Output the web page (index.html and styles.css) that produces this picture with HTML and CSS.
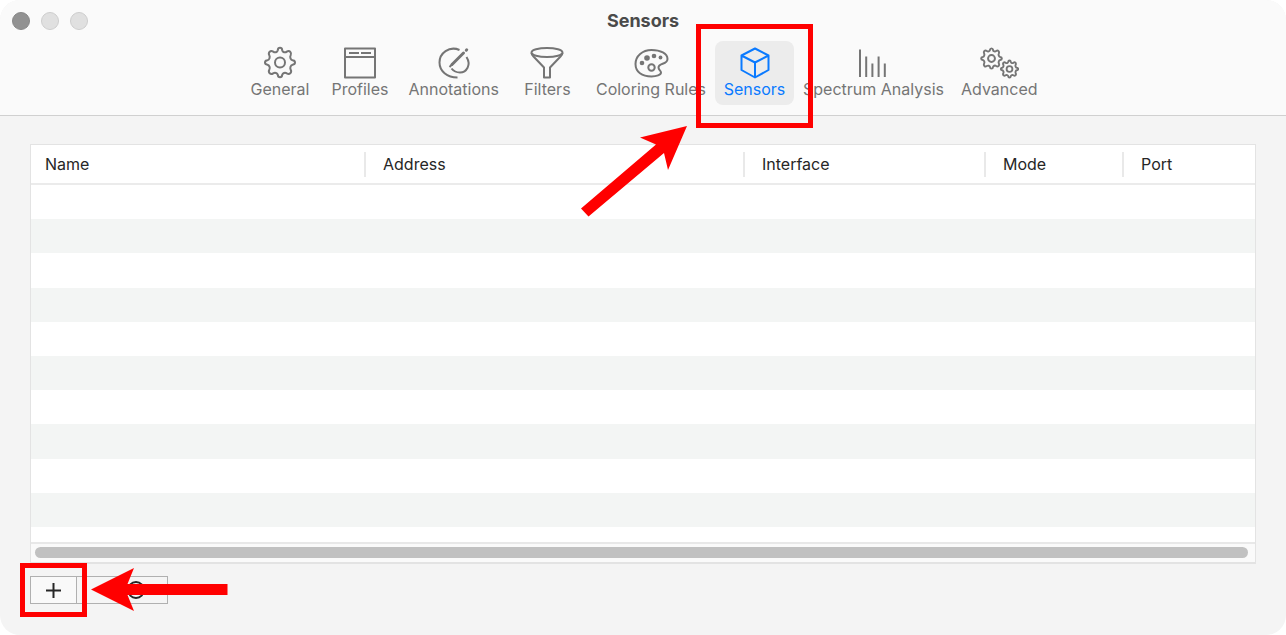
FILE: index.html
```html
<!DOCTYPE html>
<html lang="en">
<head>
<meta charset="utf-8">
<title>Sensors</title>
<link rel="stylesheet" href="styles.css">
</head>
<body>
<div class="window">
  <header class="titlebar">
    <div class="title-row">
      <div class="lights">
        <button class="light light-close" aria-label="Close"></button>
        <button class="light" aria-label="Minimize"></button>
        <button class="light" aria-label="Zoom"></button>
      </div>
      <h1 class="title">Sensors</h1>
    </div>
    <nav class="toolbar">
      <button class="tab">
        <svg class="icon" width="40" height="34" viewBox="0 0 40 34"><use href="#gear"/></svg>
        <span>General</span>
      </button>
      <button class="tab">
        <svg class="icon" width="40" height="34" viewBox="0 0 40 34"><path d="M5 3.500h30v29h-30zM5 12h30M9 8h10M21 8h10"/></svg>
        <span>Profiles</span>
      </button>
      <button class="tab">
        <svg class="icon" width="40" height="34" viewBox="0 0 40 34"><path d="M25.500 5C15 .500 5.500 8.500 5.500 17.500C5.500 26 13 32.500 23.500 32.500M32.500 12C37.500 20 32.500 27.500 26 27.500C22 27.500 19.500 26 17.500 23.500"/><path class="thick" d="M18 19.500L29.500 8M32.300 5.200l.400-.400"/><path d="M15.500 22l3-3"/></svg>
        <span>Annotations</span>
      </button>
      <button class="tab">
        <svg class="icon" width="40" height="34" viewBox="0 0 40 34"><ellipse cx="20" cy="7.500" rx="15.500" ry="4.500"/><path d="M4.500 8c0 1.500 1 2.500 2 3.500L17 22.500V32.500h6V22.500L33.500 11.500c1-1 2-2 2-3.500"/></svg>
        <span>Filters</span>
      </button>
      <button class="tab">
        <svg class="icon" width="40" height="34" viewBox="0 0 40 34"><path d="M20.500 5C11.500 5 4.500 11 4.500 19S11 31.500 20.500 31.500c5 0 9.500-1.500 9.500-4 0-2-2.500-2.500-2.500-5 0-5 9-2.500 9-8.500 0-5.500-7-9-16-9z"/><circle cx="20.500" cy="22.500" r="3.200"/><g class="dots"><circle cx="11" cy="18" r="2.300"/><circle cx="16" cy="13" r="2.800"/><circle cx="23" cy="11" r="2.300"/><circle cx="29.500" cy="12.500" r="1.900"/></g></svg>
        <span>Coloring Rules</span>
      </button>
      <button class="tab tab-active" aria-current="page">
        <svg class="icon" width="40" height="34" viewBox="0 0 40 34"><path d="M20 3.500L33.500 10.500V25L20 32.500L6.500 25V10.500zM6.500 10.500L20 17.500L33.500 10.500M20 17.500V32.500"/></svg>
        <span>Sensors</span>
      </button>
      <button class="tab">
        <svg class="icon" width="40" height="34" viewBox="0 0 40 34"><path d="M7 4.500V32M13.200 11.500V32M19.400 18.500V32M25.600 11.500V32M31.800 18.500V32"/></svg>
        <span>Spectrum Analysis</span>
      </button>
      <button class="tab">
        <svg class="icon" width="40" height="34" viewBox="0 0 40 34"><g transform="translate(12.500 13.500) scale(.69) translate(-20 -17.500)"><use href="#gear" stroke-width="2.800"/></g><g transform="translate(30.500 24) scale(.58) translate(-20 -17.500)"><use href="#gear" stroke-width="3.200"/></g></svg>
        <span>Advanced</span>
      </button>
    </nav>
  </header>

  <main class="content">
    <section class="sensor-list">
      <table class="grid">
        <colgroup><col class="col-name"><col class="col-address"><col class="col-interface"><col class="col-mode"><col></colgroup>
        <thead>
          <tr><th><div>Name</div></th><th><div>Address</div></th><th><div>Interface</div></th><th><div>Mode</div></th><th><div>Port</div></th></tr>
        </thead>
        <tbody>
          <tr><td colspan="5"></td></tr>
          <tr><td colspan="5"></td></tr>
          <tr><td colspan="5"></td></tr>
          <tr><td colspan="5"></td></tr>
          <tr><td colspan="5"></td></tr>
          <tr><td colspan="5"></td></tr>
          <tr><td colspan="5"></td></tr>
          <tr><td colspan="5"></td></tr>
          <tr><td colspan="5"></td></tr>
          <tr><td colspan="5"></td></tr>
          <tr class="partial"><td colspan="5"></td></tr>
        </tbody>
      </table>
      <div class="scroll-track"><div class="scroll-thumb"></div></div>
    </section>
    <div class="actions">
      <button class="action action-add" aria-label="Add"><svg width="15" height="15" viewBox="0 0 15 15"><path d="M7.500 0V15M0 7.500H15"/></svg></button>
      <button class="action action-more" aria-label="More options"><svg width="20" height="20" viewBox="0 0 20 20"><circle cx="10" cy="10" r="8"/></svg></button>
    </div>
  </main>

  <svg class="callouts" width="1286" height="635" viewBox="0 0 1286 635" aria-hidden="true">
    <rect x="698.500" y="26.500" width="112" height="99"/>
    <rect x="22.500" y="565.500" width="62" height="49"/>
    <path d="M687 126L668 170L664 153L588.500 216.500L581 208.500L656 144.500L640 137.500z"/>
    <path d="M91 589.500L134 568L127.500 584H227.500V595H127.500L134 611z"/>
  </svg>
</div>

<svg class="defs" width="0" height="0" aria-hidden="true">
  <defs>
    <path id="gear" d="M17.800 5.200Q18 2.800 20 2.800T22.200 5.200Q22.500 6.800 24 7.200T26.800 6.600Q28.800 5.200 30.200 6.700T30.700 10.200Q29.800 11.600 30.500 13.300T32.600 15.300Q35 15.600 35 17.500T32.600 19.700Q31 20 30.500 21.700T30.700 24.800Q31.800 26.900 30.300 28.300T26.800 28.400Q25.400 27.400 24 28T22.200 29.800Q22 32.200 20 32.200T17.800 29.800Q17.500 28.500 16 28T13.200 28.400Q11.200 29.800 9.700 28.300T9.300 24.800Q10.200 23.400 9.500 21.700T7.400 19.700Q5 19.400 5 17.500T7.400 15.300Q9 15 9.500 13.300T9.300 10.200Q8.200 8.200 9.700 6.700T13.200 6.600Q14.600 7.600 16 7.200T17.800 5.200zM25 17.500A5 5 0 1 1 15 17.500A5 5 0 1 1 25 17.500z"/>
  </defs>
</svg>
</body>
</html>
```
FILE: styles.css
```css
* { box-sizing: border-box; }

body {
  margin: 0;
  background: #fff;
  font-family: Inter, "Liberation Sans", sans-serif;
  font-size: 16px;
  color: #262626;
}

button {
  margin: 0;
  padding: 0;
  border: 0;
  background: none;
  font: inherit;
  color: inherit;
}

.defs { position: absolute; }

.window {
  position: relative;
  display: flex;
  flex-direction: column;
  min-height: 100vh;
  border-radius: 20px;
  overflow: hidden;
  background: #f4f4f4;
}

.titlebar {
  height: 116px;
  background: #fafafa;
  border-bottom: 1px solid #d0d0d0;
}

.title-row {
  display: grid;
  grid-template-columns: 1fr auto 1fr;
  align-items: center;
  height: 41px;
  padding: 0 12px;
}

.lights { display: flex; gap: 11px; }

.light {
  width: 18px;
  height: 18px;
  border: 1px solid #cdcdcd;
  border-radius: 50%;
  background: #e0e0e0;
}

.light-close { background: #929292; border-color: #888; }

.title {
  margin: 0;
  font-size: 18px;
  line-height: 24px;
  font-weight: 700;
  color: #4a4a4a;
}

.toolbar { display: flex; justify-content: center; gap: 1px; }

.tab {
  display: flex;
  flex-direction: column;
  align-items: center;
  min-width: 79px;
  height: 64px;
  padding: 4px 8px;
  border-radius: 8px;
  line-height: 20px;
  white-space: nowrap;
  color: #757575;
}

.tab-active { background: #ececec; color: #0a7aff; }

.icon {
  flex: none;
  fill: none;
  stroke: currentColor;
  stroke-width: 2;
  stroke-linejoin: round;
}

.icon .thick { stroke-width: 3; stroke-linecap: round; }
.icon .dots { fill: currentColor; stroke: none; }

.content {
  flex: 1;
  display: flex;
  flex-direction: column;
  gap: 12px;
  padding: 28px 30px 31px;
}

.sensor-list {
  flex: 1;
  display: flex;
  flex-direction: column;
  border: 1px solid #e3e3e3;
  border-bottom-width: 2px;
  background: #fff;
}

.grid {
  flex: 1;
  width: 100%;
  table-layout: fixed;
  border-collapse: separate;
  border-spacing: 0;
}

.col-name { width: 335px; }
.col-address { width: 379px; }
.col-interface { width: 241px; }
.col-mode { width: 138px; }

.grid th {
  height: 40px;
  padding: 1px 0 0;
  border-bottom: 2px solid #ebebeb;
  font-weight: 400;
  text-align: left;
}

.grid th div {
  padding-left: 17px;
  border-right: 2px solid #e9e9e9;
  line-height: 25px;
}

.grid th:first-child div { padding-left: 14px; }
.grid th:last-child div { border-right: 0; }
.grid td { padding: 0; }
.grid tbody tr:nth-child(even) { background: #f3f5f4; }
.grid .partial td { height: 15px; }

.scroll-track {
  height: 20px;
  padding: 3px 7px 4px 4px;
  border-top: 2px solid #e8e8e8;
  background: #fafafa;
}

.scroll-thumb { height: 11px; border-radius: 6px; background: #c1c1c1; }

.actions { display: flex; }

.action {
  display: flex;
  align-items: center;
  justify-content: center;
  height: 28px;
  border: 1px solid #b0b0b0;
  background: #f9f9f9;
}

.action svg { fill: none; stroke: #262626; stroke-width: 2; }
.action-add { width: 47px; }
.action-more { width: 91px; padding-left: 27px; border-left: 0; background: #f5f5f5; }

.callouts {
  position: absolute;
  top: 0;
  left: 0;
  pointer-events: none;
  fill: #f00;
}

.callouts rect { fill: none; stroke: #f00; stroke-width: 5; }
```
